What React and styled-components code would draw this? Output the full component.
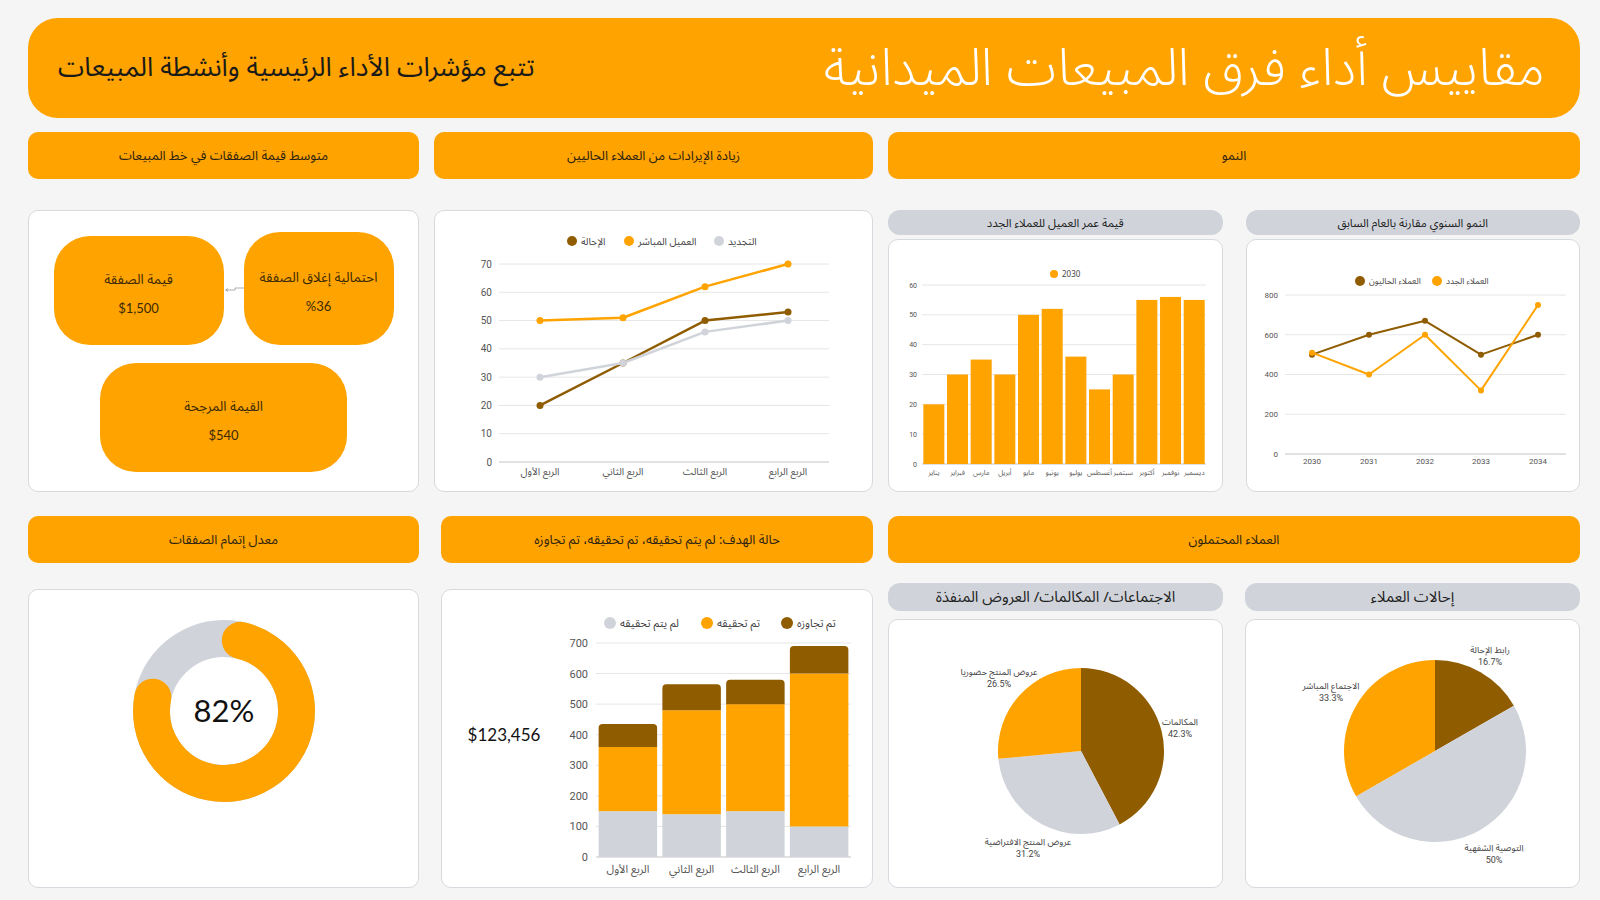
import React from "react";
import styled, { createGlobalStyle } from "styled-components";

const ORANGE = "#ffa300";
const BROWN = "#8f5c00";
const GRAY = "#d0d4da";
const AR = `"Noto Sans Arabic", "DejaVu Sans", "Noto Sans", sans-serif`;

const GlobalStyle = createGlobalStyle`
  body {
    margin: 0;
    background: #f5f5f5;
    font-family: ${AR};
  }
`;

const Page = styled.div`
  width: 1600px;
  height: 900px;
  box-sizing: border-box;
  padding: 18px 20px 0 28px;
  display: flex;
  flex-direction: column;
  direction: rtl;
`;

const Header = styled.header`
  height: 100px;
  flex-shrink: 0;
  background: ${ORANGE};
  border-radius: 30px;
  display: flex;
  align-items: center;
  justify-content: space-between;
  padding: 0 35px 0 30px;
`;

const Title = styled.h1`
  margin: 0;
  font-size: 52px;
  font-weight: 300;
  color: #fff;
`;

const Subtitle = styled.h2`
  margin: 0;
  font-size: 26.5px;
  font-weight: 400;
  color: #1a1a1a;
`;

const Row = styled.div`
  display: grid;
  grid-template-columns: 692px 439px 391px;
  column-gap: 15px;
  margin-top: ${(p) => p.$top}px;
  height: ${(p) => p.$h}px;
  flex-shrink: 0;
`;

const TabBar = styled.div`
  background: ${ORANGE};
  border-radius: 10px;
  display: flex;
  align-items: center;
  justify-content: center;
  font-size: 13px;
  color: #2d2210;
  margin-left: ${(p) => p.$inset || 0}px;
`;

const Pair = styled.div`
  display: grid;
  grid-template-columns: 1fr 1fr;
  column-gap: ${(p) => p.$gap}px;
  min-height: 0;
`;

const SubPanel = styled.div`
  display: flex;
  flex-direction: column;
  min-height: 0;
`;

const SubHead = styled.div`
  height: ${(p) => p.$h}px;
  flex-shrink: 0;
  margin-bottom: ${(p) => p.$gap}px;
  background: ${GRAY};
  border-radius: 12px;
  display: flex;
  align-items: center;
  justify-content: center;
  font-size: ${(p) => p.$fs}px;
  color: #222;
`;

const Card = styled.div`
  flex: 1;
  background: #fff;
  border: 1px solid #d6d9de;
  border-radius: 10px;
  box-sizing: border-box;
  overflow: hidden;
  margin-top: ${(p) => p.$offset || 0}px;
  margin-left: ${(p) => p.$inset || 0}px;
`;

const DealCard = styled(Card)`
  display: flex;
  flex-direction: column;
  align-items: center;
  padding-top: 21px;
  gap: 18px;
`;

const DealRow = styled.div`
  display: flex;
  align-items: flex-end;
`;

const DealBox = styled.div`
  width: ${(p) => p.$w}px;
  height: ${(p) => p.$h}px;
  background: ${ORANGE};
  border-radius: 36px;
  display: flex;
  flex-direction: column;
  align-items: center;
  justify-content: center;
  gap: 6px;
  color: #3b2a05;
`;

const DealLabel = styled.div`
  font-size: 13.5px;
`;

const DealValue = styled.div`
  font-size: 13px;
  font-family: "Lato", "Open Sans", sans-serif;
`;

const Connector = styled.svg`
  align-self: center;
  flex-shrink: 0;
`;

const DonutCard = styled(Card)`
  display: flex;
  justify-content: center;
  padding-top: 26px;
`;

const GoalCard = styled(Card)`
  display: flex;
  align-items: stretch;
`;

const Amount = styled.div`
  width: 124px;
  flex-shrink: 0;
  display: flex;
  align-items: center;
  justify-content: center;
  padding-bottom: 8px;
  font-family: "Lato", "Open Sans", sans-serif;
  font-size: 17px;
  color: #111;
  direction: ltr;
`;

const ChartSvg = styled.svg`
  display: block;
  flex-shrink: 0;
  direction: ltr;
  font-family: ${AR};
`;

const AxisText = styled.text`
  font-size: ${(p) => p.$fs}px;
  fill: ${(p) => p.$color || "#555"};
  font-family: ${(p) => (p.$num ? `"Roboto", "Liberation Sans", sans-serif` : AR)};
`;

const GridLine = styled.line`
  stroke: ${(p) => (p.$base ? "#c4c4c4" : "#e6e6e6")};
  stroke-width: 1;
`;

const CenterText = styled.text`
  font-family: "Lato", "Open Sans", sans-serif;
  font-size: 31px;
  fill: #111;
`;

/* ---------- chart helpers ---------- */

const pt = (cx, cy, r, a) => [
  cx + r * Math.sin((a * Math.PI) / 180),
  cy - r * Math.cos((a * Math.PI) / 180),
];

function slicePath(cx, cy, r, a0, a1) {
  const [x0, y0] = pt(cx, cy, r, a0);
  const [x1, y1] = pt(cx, cy, r, a1);
  const large = a1 - a0 > 180 ? 1 : 0;
  return `M${cx} ${cy} L${x0} ${y0} A${r} ${r} 0 ${large} 1 ${x1} ${y1} Z`;
}

function Legend({ items, y, fs, r }) {
  return (
    <g>
      {items.map((it) => (
        <g key={it.t}>
          <circle cx={it.x} cy={y} r={r} fill={it.c} />
          <AxisText x={it.x + r + 4} y={y + fs * 0.35} $fs={fs} $color="#444">
            {it.t}
          </AxisText>
        </g>
      ))}
    </g>
  );
}

function Axes({ cfg, y }) {
  const ticks = [];
  for (let v = 0; v <= cfg.max; v += cfg.step) ticks.push(v);
  return (
    <g>
      {ticks.map((v) => (
        <g key={v}>
          <GridLine x1={cfg.left} x2={cfg.right} y1={y(v)} y2={y(v)} $base={v === 0} />
          <AxisText x={cfg.tickX} y={y(v) + cfg.tickFs * 0.36} textAnchor="end" $fs={cfg.tickFs} $num>
            {v}
          </AxisText>
        </g>
      ))}
      {cfg.labels.map((l, i) => (
        <AxisText
          key={l}
          x={cfg.xs[i]}
          y={cfg.labelY}
          textAnchor="middle"
          $fs={cfg.labelFs}
          $num={cfg.numLabels}
        >
          {l}
        </AxisText>
      ))}
    </g>
  );
}

function LineChart({ cfg }) {
  const y = (v) => cfg.bottom - (v / cfg.max) * (cfg.bottom - cfg.top);
  return (
    <ChartSvg width={cfg.w} height={cfg.h}>
      <Legend {...cfg.legend} />
      <Axes cfg={cfg} y={y} />
      {cfg.series.map((s) => (
        <g key={s.c}>
          <polyline
            points={s.d.map((v, i) => `${cfg.xs[i]},${y(v)}`).join(" ")}
            fill="none"
            stroke={s.c}
            strokeWidth={cfg.lw}
            strokeLinejoin="round"
          />
          {s.d.map((v, i) => (
            <circle key={i} cx={cfg.xs[i]} cy={y(v)} r={cfg.lw + 1} fill={s.c} />
          ))}
        </g>
      ))}
    </ChartSvg>
  );
}

function BarChart({ cfg }) {
  const y = (v) => cfg.bottom - (v / cfg.max) * (cfg.bottom - cfg.top);
  return (
    <ChartSvg width={cfg.w} height={cfg.h}>
      <Legend {...cfg.legend} />
      <Axes cfg={cfg} y={y} />
      {cfg.data.map((v, i) => (
        <rect
          key={i}
          x={cfg.xs[i] - cfg.bw / 2}
          y={y(v)}
          width={cfg.bw}
          height={cfg.bottom - y(v)}
          fill={ORANGE}
        />
      ))}
    </ChartSvg>
  );
}

function topRounded(x, y0, w, y1, r) {
  return `M${x} ${y1} V${y0 + r} Q${x} ${y0} ${x + r} ${y0} H${x + w - r} Q${x + w} ${y0} ${x + w} ${y0 + r} V${y1} Z`;
}

function StackedChart({ cfg }) {
  const y = (v) => cfg.bottom - (v / cfg.max) * (cfg.bottom - cfg.top);
  return (
    <ChartSvg width={cfg.w} height={cfg.h}>
      <Legend {...cfg.legend} />
      <Axes cfg={cfg} y={y} />
      {cfg.stacks.map((st, i) => {
        const x = cfg.xs[i] - cfg.bw / 2;
        const [a, b, c] = st;
        return (
          <g key={i}>
            <rect x={x} y={y(a)} width={cfg.bw} height={cfg.bottom - y(a)} fill={GRAY} />
            <rect x={x} y={y(a + b)} width={cfg.bw} height={y(a) - y(a + b)} fill={ORANGE} />
            <path d={topRounded(x, y(a + b + c), cfg.bw, y(a + b), 4)} fill={BROWN} />
          </g>
        );
      })}
    </ChartSvg>
  );
}

function Pie({ cfg }) {
  let a = 0;
  return (
    <ChartSvg width={cfg.w} height={cfg.h}>
      {cfg.slices.map((s) => {
        const a0 = a;
        a += s.v * 3.6;
        return <path key={s.c} d={slicePath(cfg.cx, cfg.cy, cfg.r, a0, a)} fill={s.c} />;
      })}
      {cfg.labels.map((l) => (
        <g key={l.t}>
          <AxisText x={l.x} y={l.y} textAnchor="middle" $fs={9} $color="#444">
            {l.t}
          </AxisText>
          <AxisText x={l.x} y={l.y + 12} textAnchor="middle" $fs={9} $color="#444" $num>
            {l.p}
          </AxisText>
        </g>
      ))}
    </ChartSvg>
  );
}

function Donut({ pct }) {
  const cx = 95;
  const cy = 95;
  const r = 72.5;
  const a0 = 13;
  const a1 = 281;
  const [x0, y0] = pt(cx, cy, r, a0);
  const [x1, y1] = pt(cx, cy, r, a1);
  return (
    <ChartSvg width={190} height={190}>
      <circle cx={cx} cy={cy} r={r} fill="none" stroke={GRAY} strokeWidth={37} />
      <path
        d={`M${x0} ${y0} A${r} ${r} 0 1 1 ${x1} ${y1}`}
        fill="none"
        stroke={ORANGE}
        strokeWidth={37}
        strokeLinecap="round"
      />
      <CenterText x={cx} y={cy + 11} textAnchor="middle">
        {pct}%
      </CenterText>
    </ChartSvg>
  );
}

/* ---------- data ---------- */

const quarters = ["الربع الأول", "الربع الثاني", "الربع الثالث", "الربع الرابع"];

const revenue = {
  w: 437, h: 280,
  left: 64, right: 394, top: 53, bottom: 251,
  max: 70, step: 10, tickX: 57, tickFs: 10,
  xs: [105, 188, 270, 353], labels: quarters, labelY: 264, labelFs: 10,
  lw: 2.5,
  legend: {
    y: 30, fs: 10, r: 5,
    items: [
      { x: 137, c: BROWN, t: "الإحالة" },
      { x: 194, c: ORANGE, t: "العميل المباشر" },
      { x: 284, c: GRAY, t: "التجديد" },
    ],
  },
  series: [
    { c: BROWN, d: [20, 35, 50, 53] },
    { c: ORANGE, d: [50, 51, 62, 70] },
    { c: GRAY, d: [30, 35, 46, 50] },
  ],
};

const months = [
  "يناير", "فبراير", "مارس", "أبريل", "مايو", "يونيو",
  "يوليو", "أغسطس", "سبتمبر", "أكتوبر", "نوفمبر", "ديسمبر",
];

const ltv = {
  w: 332, h: 250,
  left: 32, right: 316, top: 45, bottom: 224,
  max: 60, step: 10, tickX: 27, tickFs: 7,
  xs: months.map((_, i) => 32 + 23.67 * (i + 0.5)), labels: months, labelY: 235, labelFs: 7,
  bw: 21,
  legend: { y: 34, fs: 8, r: 4, items: [{ x: 164, c: ORANGE, t: "2030" }] },
  data: [20, 30, 35, 30, 50, 52, 36, 25, 30, 55, 56, 55],
};

const growth = {
  w: 332, h: 250,
  left: 38, right: 319, top: 55, bottom: 214,
  max: 800, step: 200, tickX: 31, tickFs: 8,
  xs: [65, 122, 178, 234, 291], labels: ["2030", "2031", "2032", "2033", "2034"],
  labelY: 224, labelFs: 8, numLabels: true,
  lw: 2,
  legend: {
    y: 41, fs: 8.5, r: 5,
    items: [
      { x: 113, c: BROWN, t: "العملاء الحاليون" },
      { x: 190, c: ORANGE, t: "العملاء الجدد" },
    ],
  },
  series: [
    { c: BROWN, d: [500, 600, 670, 500, 600] },
    { c: ORANGE, d: [510, 400, 600, 320, 750] },
  ],
};

const goal = {
  w: 306, h: 297,
  left: 30, right: 285, top: 53, bottom: 267,
  max: 700, step: 100, tickX: 22, tickFs: 11,
  xs: [0, 1, 2, 3].map((i) => 30 + 63.75 * (i + 0.5)), labels: quarters, labelY: 283, labelFs: 11,
  bw: 58.5,
  legend: {
    y: 33, fs: 11, r: 6,
    items: [
      { x: 44, c: GRAY, t: "لم يتم تحقيقه" },
      { x: 141, c: ORANGE, t: "تم تحقيقه" },
      { x: 221, c: BROWN, t: "تم تجاوزه" },
    ],
  },
  stacks: [
    [150, 210, 75],
    [140, 340, 85],
    [150, 350, 80],
    [100, 500, 90],
  ],
};

const meetings = {
  w: 333, h: 267, cx: 192, cy: 131, r: 83,
  slices: [
    { v: 42.3, c: BROWN },
    { v: 31.2, c: GRAY },
    { v: 26.5, c: ORANGE },
  ],
  labels: [
    { x: 291, y: 105, t: "المكالمات", p: "42.3%" },
    { x: 110, y: 55, t: "عروض المنتج حضوريا", p: "26.5%" },
    { x: 139, y: 225, t: "عروض المنتج الافتراضية", p: "31.2%" },
  ],
};

const referrals = {
  w: 333, h: 267, cx: 189, cy: 131, r: 91,
  slices: [
    { v: 16.7, c: BROWN },
    { v: 50, c: GRAY },
    { v: 33.3, c: ORANGE },
  ],
  labels: [
    { x: 244, y: 33, t: "رابط الإحالة", p: "16.7%" },
    { x: 85, y: 69, t: "الاجتماع المباشر", p: "33.3%" },
    { x: 248, y: 231, t: "التوصية الشفهية", p: "50%" },
  ],
};

export default function App() {
  return (
    <>
      <GlobalStyle />
      <Page dir="rtl">
        <Header>
          <Title>مقاييس أداء فرق المبيعات الميدانية</Title>
          <Subtitle>تتبع مؤشرات الأداء الرئيسية وأنشطة المبيعات</Subtitle>
        </Header>

        <Row $top={14} $h={47}>
          <TabBar>النمو</TabBar>
          <TabBar>زيادة الإيرادات من العملاء الحاليين</TabBar>
          <TabBar>متوسط قيمة الصفقات في خط المبيعات</TabBar>
        </Row>

        <Row $top={31} $h={282}>
          <Pair $gap={23}>
            <SubPanel>
              <SubHead $h={25} $gap={4} $fs={11.5}>النمو السنوي مقارنة بالعام السابق</SubHead>
              <Card>
                <LineChart cfg={growth} />
              </Card>
            </SubPanel>
            <SubPanel>
              <SubHead $h={25} $gap={4} $fs={11.5}>قيمة عمر العميل للعملاء الجدد</SubHead>
              <Card>
                <BarChart cfg={ltv} />
              </Card>
            </SubPanel>
          </Pair>
          <Card>
            <LineChart cfg={revenue} />
          </Card>
          <DealCard>
            <DealRow>
              <DealBox $w={150} $h={113}>
                <DealLabel>احتمالية إغلاق الصفقة</DealLabel>
                <DealValue>%36</DealValue>
              </DealBox>
              <Connector width="20" height="8" viewBox="0 0 20 8">
                <path d="M20 3 H11 V5 H2" fill="none" stroke="#9a9a9a" strokeWidth="0.8" />
                <path d="M4 3.5 L1.5 5 L4 6.5" fill="none" stroke="#9a9a9a" strokeWidth="0.8" />
              </Connector>
              <DealBox $w={170} $h={109}>
                <DealLabel>قيمة الصفقة</DealLabel>
                <DealValue>$1,500</DealValue>
              </DealBox>
            </DealRow>
            <DealBox $w={247} $h={109}>
              <DealLabel>القيمة المرجحة</DealLabel>
              <DealValue>$540</DealValue>
            </DealBox>
          </DealCard>
        </Row>

        <Row $top={24} $h={47}>
          <TabBar>العملاء المحتملون</TabBar>
          <TabBar $inset={7}>حالة الهدف: لم يتم تحقيقه، تم تحقيقه، تم تجاوزه</TabBar>
          <TabBar>معدل إتمام الصفقات</TabBar>
        </Row>

        <Row $top={20} $h={305}>
          <Pair $gap={22}>
            <SubPanel>
              <SubHead $h={28} $gap={8} $fs={15}>إحالات العملاء</SubHead>
              <Card>
                <Pie cfg={referrals} />
              </Card>
            </SubPanel>
            <SubPanel>
              <SubHead $h={28} $gap={8} $fs={15}>الاجتماعات/ المكالمات/ العروض المنفذة</SubHead>
              <Card>
                <Pie cfg={meetings} />
              </Card>
            </SubPanel>
          </Pair>
          <GoalCard $offset={6} $inset={7}>
            <StackedChart cfg={goal} />
            <Amount>$123,456</Amount>
          </GoalCard>
          <DonutCard $offset={6}>
            <Donut pct={82} />
          </DonutCard>
        </Row>
      </Page>
    </>
  );
}
